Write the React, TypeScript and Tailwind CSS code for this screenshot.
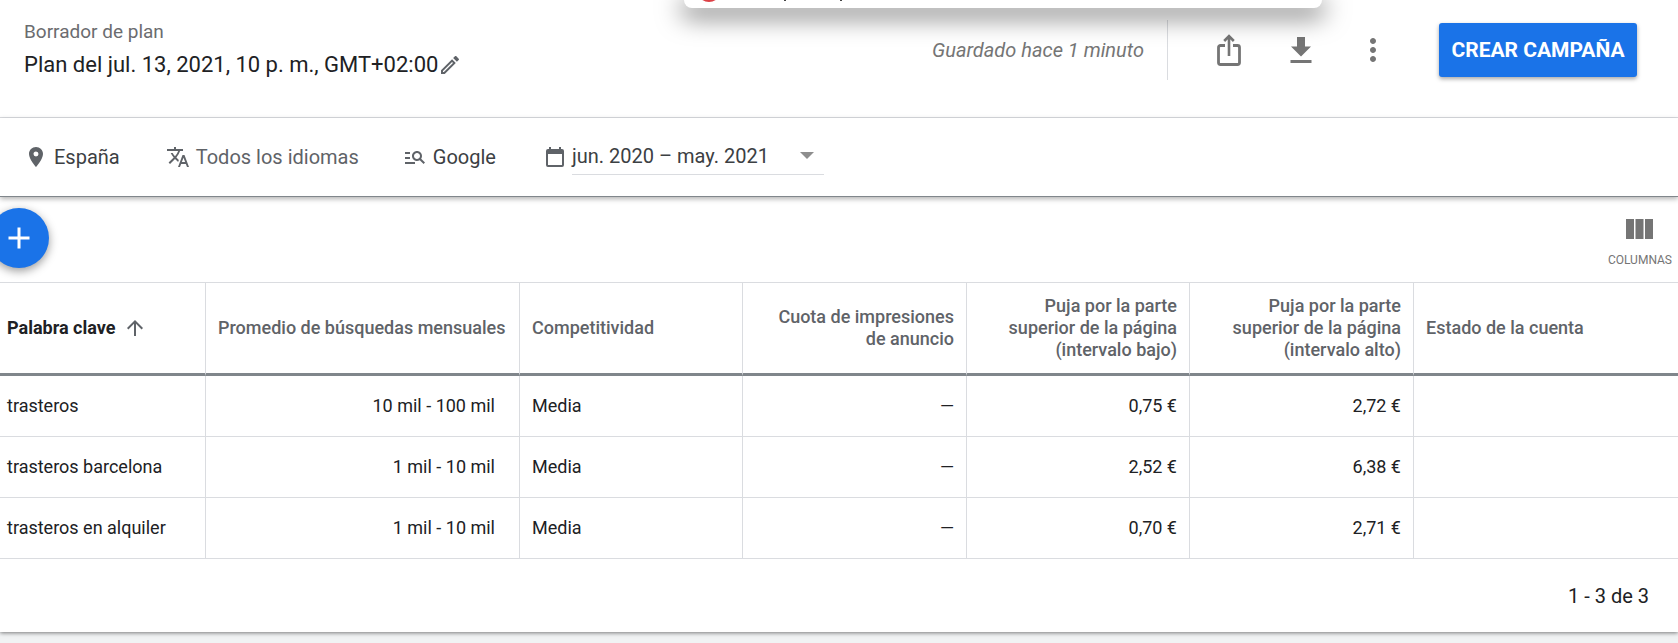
import { MdLocationOn, MdTranslate, MdManageSearch, MdAdd, MdArrowUpward, MdMoreVert, MdOutlineEdit } from "react-icons/md";

const columns = [
  { title: "Palabra clave", width: "w-[206px]" },
  { title: "Promedio de búsquedas mensuales", width: "w-[314px]" },
  { title: "Competitividad", width: "w-[223px]" },
  { title: "Cuota de impresiones de anuncio", width: "w-[224px]", right: true },
  { title: "Puja por la parte superior de la página (intervalo bajo)", width: "w-[223px]", right: true },
  { title: "Puja por la parte superior de la página (intervalo alto)", width: "w-[224px]", right: true },
  { title: "Estado de la cuenta", width: "" },
];

const rows = [
  { keyword: "trasteros", volume: "10 mil - 100 mil", low: "0,75 €", high: "2,72 €" },
  { keyword: "trasteros barcelona", volume: "1 mil - 10 mil", low: "2,52 €", high: "6,38 €" },
  { keyword: "trasteros en alquiler", volume: "1 mil - 10 mil", low: "0,70 €", high: "2,71 €" },
];

function ShareIcon() {
  return (
    <svg className="h-8 w-6 shrink-0" viewBox="0 0 24 32" fill="none" stroke="currentColor" aria-hidden="true">
      <path d="M8 11.5H3.5a2 2 0 0 0-2 2v15a2 2 0 0 0 2 2h17a2 2 0 0 0 2-2v-15a2 2 0 0 0-2-2H16" strokeWidth="2.8" />
      <path d="M12 22V2.5M7.2 7 12 2.2 16.8 7" strokeWidth="2.6" />
    </svg>
  );
}

function DownloadIcon() {
  return (
    <svg className="h-[26px] w-[22px] shrink-0" viewBox="0 0 22 26" fill="currentColor" aria-hidden="true">
      <path d="M7 0h8v9.500h6L11 19.500 1 9.500h6zM.5 23h21v3H.5z" />
    </svg>
  );
}

function CalendarIcon() {
  return (
    <svg className="h-5 w-[18px]" viewBox="0 0 18 20" fill="currentColor" aria-hidden="true">
      <path d="M16 2h-1V0h-2v2H5V0H3v2H2a2 2 0 0 0-2 2v14a2 2 0 0 0 2 2h14a2 2 0 0 0 2-2V4a2 2 0 0 0-2-2zm0 16H2V7h14z" />
    </svg>
  );
}

export default function App() {
  return (
    <div className="min-h-screen overflow-hidden bg-[#f1f3f4] font-['Roboto',sans-serif] text-[#202124]">
      {/* Lower edge of the floating dialog that hangs over the header */}
      <div className="absolute left-1/2 top-0 h-2 w-[638px] -translate-x-[155px] rounded-b-[20px] bg-white shadow-[0_6px_24px_4px_rgba(0,0,0,0.5)]">
        <svg className="h-2 w-[200px]" viewBox="0 0 200 8" aria-hidden="true">
          <circle cx="25" cy="-10" r="12" fill="#dc4045" />
          <path d="M100 0h2v1h-2zM156 0h2v1h-2z" fill="#444" />
        </svg>
      </div>

      <header className="flex h-[118px] items-start border-b border-[#dadce0] bg-white pl-6 pr-[41px]">
        <div className="pt-5">
          <p className="text-[19px] leading-6 text-[#6b6c6f]">Borrador de plan</p>
          <div className="mt-[7px] flex items-center">
            <h1 className="text-[22px] leading-7">Plan del jul. 13, 2021, 10 p. m., GMT+02:00</h1>
            <button type="button" aria-label="Editar nombre" className="text-[#5f6368]">
              <MdOutlineEdit className="size-6" />
            </button>
          </div>
        </div>
        <div className="ml-auto flex items-center pt-5">
          <span className="text-[20px] italic text-[#757575]">Guardado hace 1 minuto</span>
          <div className="ml-[23px] h-[60px] w-px bg-[#dadce0]" />
          <div className="ml-[49px] flex items-center gap-12 text-[#757575]">
            <button type="button" aria-label="Compartir" className="flex w-6 justify-center"><ShareIcon /></button>
            <button type="button" aria-label="Descargar" className="flex w-6 justify-center"><DownloadIcon /></button>
            <button type="button" aria-label="Más opciones" className="flex w-6 justify-center"><MdMoreVert className="size-9 shrink-0" /></button>
          </div>
          <button type="button" className="ml-[54px] h-[54px] w-[198px] whitespace-nowrap rounded-[3px] bg-[#1a73e8] pt-0.5 text-[21px] font-bold text-white shadow-[0_2px_4px_rgba(0,0,0,0.35)]">
            CREAR CAMPAÑA
          </button>
        </div>
      </header>

      <nav aria-label="Filtros" className="relative z-10 flex h-[79px] items-center border-b border-[#80868b] bg-white pl-6 text-[20px] text-[#3c4043] shadow-[0_2px_5px_rgba(0,0,0,0.3)]">
        <button type="button" className="flex items-center gap-1.5"><MdLocationOn className="size-6 text-[#5f6368]" />España</button>
        <button type="button" className="ml-[46px] flex items-center gap-1.5 text-[#5f6368]"><MdTranslate className="size-6" />Todos los idiomas</button>
        <button type="button" className="ml-11 flex items-center gap-1.5"><MdManageSearch className="size-6 text-[#5f6368]" />Google</button>
        <div className="ml-[50px] flex items-center gap-2">
          <span className="text-[#5f6368]"><CalendarIcon /></span>
          <button type="button" className="flex h-9 w-[252px] items-center justify-between border-b border-[#dadce0] pb-0.5 pr-2.5">
            jun. 2020 – may. 2021
            <svg className="h-[7px] w-3.5" viewBox="0 0 14 7" fill="#8e8e8e" aria-hidden="true"><path d="M0 0h14L7 7z" /></svg>
          </button>
        </div>
      </nav>

      <main className="bg-white shadow-[0_1px_4px_rgba(0,0,0,0.5)]">
        <div className="flex h-[85px] items-start justify-between pr-1.5 pt-[11px]">
          <button type="button" aria-label="Añadir palabras clave" className="-ml-[11px] flex size-[60px] items-center justify-center rounded-full bg-[#1a73e8] text-white shadow-[0_3px_10px_rgba(0,0,0,0.4)]">
            <MdAdd className="size-9" />
          </button>
          <button type="button" className="mt-[11px] flex flex-col items-center gap-[13px] text-[#757575]">
            <svg className="h-5 w-[27px]" viewBox="0 0 27 20" fill="currentColor" aria-hidden="true"><path d="M0 0h8v20H0zM9.500 0h8v20h-8zM19 0h8v20h-8z" /></svg>
            <span className="text-[12px] leading-4">COLUMNAS</span>
          </button>
        </div>
        <table className="w-full table-fixed border-separate border-spacing-0 text-[18px] leading-[22px]">
          <thead>
            <tr>
              {columns.map((c) => (
                <th
                  key={c.title}
                  scope="col"
                  className={`h-[94px] border-b-[3px] border-t border-r border-b-[#80868b] border-r-[#dadce0] border-t-[#dadce0] px-3 font-medium first:pl-[7px] first:font-bold first:text-[#202124] last:border-r-0 text-[#5f6368] ${c.width} ${c.right ? "text-right" : "text-left"}`}
                >
                  {c.title === "Palabra clave" ? (
                    <button type="button" className="flex items-center gap-2">{c.title}<MdArrowUpward className="size-6 text-[#5f6368]" /></button>
                  ) : c.title}
                </th>
              ))}
            </tr>
          </thead>
          <tbody className="[&_td]:h-[61px] [&_td]:border-b [&_td]:border-r [&_td]:border-[#dadce0] [&_td:last-child]:border-r-0">
            {rows.map((r) => (
              <tr key={r.keyword}>
                <td className="pl-[7px]">{r.keyword}</td>
                <td className="pr-6 text-right">{r.volume}</td>
                <td className="px-3">Media</td>
                <td className="px-3 text-right">—</td>
                <td className="px-3 text-right">{r.low}</td>
                <td className="px-3 text-right">{r.high}</td>
                <td />
              </tr>
            ))}
          </tbody>
        </table>
        <div className="flex h-[73px] items-center justify-end pr-[29px] text-[20px]">1 - 3 de 3</div>
      </main>
    </div>
  );
}
